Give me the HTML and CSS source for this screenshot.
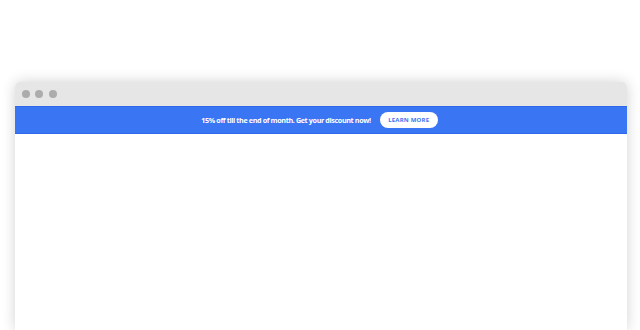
FILE: index.html
```html
<!DOCTYPE html>
<html lang="en">
<head>
    <meta charset="UTF-8">
    <meta name="viewport" content="width=device-width, initial-scale=1.0">
    <title>Discount Bar</title>
    <link rel="stylesheet" href="styles.css">
</head>
<body>
    <div class="stage">
        <div class="browser">
            <div class="titlebar">
                <span class="dot"></span>
                <span class="dot"></span>
                <span class="dot"></span>
            </div>
            <div class="promo-bar">
                <p>15% off till the end of month. Get your discount now!</p>
                <a href="#" class="btn">LEARN MORE</a>
            </div>
            <div class="page"></div>
        </div>
    </div>
</body>
</html>
```

FILE: styles.css
```css
* {
    margin: 0;
    padding: 0;
    box-sizing: border-box;
}

body {
    font-family: "Open Sans", Arial, sans-serif;
    background: #fff;
    height: 330px;
    overflow: hidden;
}

.stage {
    padding: 82px 13px 0 15px;
    height: 100%;
}

.browser {
    height: 100%;
    display: flex;
    flex-direction: column;
    background: #fff;
    border-radius: 5px 5px 0 0;
    box-shadow: 0 0 14px rgba(0, 0, 0, 0.18);
    overflow: hidden;
}

.titlebar {
    height: 24px;
    background: #e6e6e6;
    display: flex;
    align-items: center;
    gap: 5.5px;
    padding-left: 6.5px;
}

.dot {
    width: 8px;
    height: 8px;
    border-radius: 50%;
    background: #acacac;
}

.promo-bar {
    height: 28px;
    background: #3a75f3;
    border-top: 1px solid #2f69e8;
    border-bottom: 1px solid #2f69e8;
    display: flex;
    justify-content: center;
    align-items: center;
    gap: 9px;
    padding-right: 3px;
    color: #fff;
}

.promo-bar p {
    font-size: 7.2px;
    font-weight: 700;
    letter-spacing: -0.38px;
}

.btn {
    display: inline-block;
    background: #fff;
    color: #3a75f3;
    font-size: 6px;
    font-weight: 700;
    letter-spacing: 0.2px;
    text-decoration: none;
    padding: 3.5px 8.5px;
    border-radius: 8px;
    line-height: 9px;
}

.page {
    flex: 1;
    background: #fff;
}
```
